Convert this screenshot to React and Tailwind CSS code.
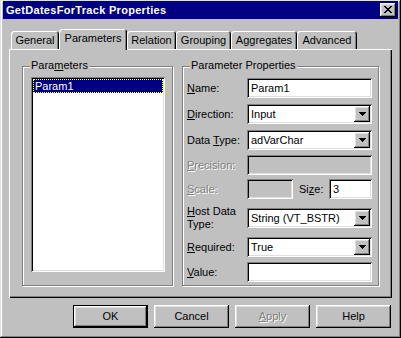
import React from "react";

const RAISED =
  "shadow-[inset_-1px_-1px_#000,inset_1px_1px_#fff,inset_-2px_-2px_#808080,inset_2px_2px_#dfdfdf]";
const SUNKEN =
  "shadow-[inset_1px_1px_#808080,inset_-1px_-1px_#fff,inset_2px_2px_#000,inset_-2px_-2px_#dfdfdf]";
const DIS = "text-[#808080] [text-shadow:1px_1px_0_#fff]";

function U({ children }) {
  return <span className="underline underline-offset-[1px]">{children}</span>;
}

function Arrow() {
  return (
    <svg width="7" height="4" viewBox="0 0 7 4" shapeRendering="crispEdges">
      <rect x="0" y="0" width="7" height="1" fill="#000" />
      <rect x="1" y="1" width="5" height="1" fill="#000" />
      <rect x="2" y="2" width="3" height="1" fill="#000" />
      <rect x="3" y="3" width="1" height="1" fill="#000" />
    </svg>
  );
}

function CloseGlyph() {
  const px = [
    [0, 0], [1, 0], [6, 0], [7, 0],
    [1, 1], [2, 1], [5, 1], [6, 1],
    [2, 2], [3, 2], [4, 2], [5, 2],
    [3, 3], [4, 3],
    [2, 4], [3, 4], [4, 4], [5, 4],
    [1, 5], [2, 5], [5, 5], [6, 5],
    [0, 6], [1, 6], [6, 6], [7, 6],
  ];
  return (
    <svg width="8" height="7" viewBox="0 0 8 7" shapeRendering="crispEdges">
      {px.map(([x, y], i) => (
        <rect key={i} x={x} y={y} width="1" height="1" fill="#000" />
      ))}
    </svg>
  );
}

function TextBox({ value, w = "w-[125px]", disabled }) {
  return (
    <div
      className={`${w} h-[20px] ${SUNKEN} ${
        disabled ? "bg-[#c0c0c0]" : "bg-white"
      } flex items-center pl-[4px] text-black`}
    >
      {value}
    </div>
  );
}

function Select({ value }) {
  return (
    <div
      className={`w-[125px] h-[20px] ${SUNKEN} bg-white flex items-center p-[2px]`}
    >
      <div className="flex-1 pl-[2px] text-black">{value}</div>
      <div
        className={`w-[16px] h-[16px] bg-[#c0c0c0] ${RAISED} flex items-center justify-center`}
      >
        <Arrow />
      </div>
    </div>
  );
}

function Tab({ label, selected, w }) {
  if (selected) {
    return (
      <div
        className={`${w} h-[21px] mb-[-1px] relative z-10 bg-[#c0c0c0] rounded-t-[3px] shadow-[inset_1px_1px_#fff,inset_-1px_0_#000,inset_-2px_0_#808080] flex justify-center pt-[3px]`}
      >
        {label}
      </div>
    );
  }
  return (
    <div
      className={`${w} h-[18px] bg-[#c0c0c0] rounded-t-[3px] shadow-[inset_1px_1px_#fff,inset_-1px_0_#000,inset_-2px_0_#808080] flex justify-center pt-[3px]`}
    >
      {label}
    </div>
  );
}

function Button({ children, def, disabled }) {
  return (
    <div
      className={`w-[75px] h-[23px] ${
        def ? "border border-black" : ""
      } bg-[#c0c0c0]`}
    >
      <div
        className={`w-full h-full ${RAISED} flex items-center justify-center ${
          disabled ? DIS : "text-black"
        }`}
      >
        {children}
      </div>
    </div>
  );
}

function Group({ legend, w, children, legendLeft = "left-[7px]" }) {
  return (
    <div
      className={`${w} h-[220px] relative border border-[#808080] shadow-[inset_1px_1px_#fff,1px_1px_#fff]`}
    >
      <div
        className={`absolute top-[-8px] ${legendLeft} bg-[#c0c0c0] px-[1px] leading-[13px]`}
      >
        {legend}
      </div>
      {children}
    </div>
  );
}

export default function App() {
  return (
    <div
      className={`w-[401px] h-[338px] bg-[#c0c0c0] text-[11px] leading-[13px] text-black font-['Liberation_Sans',Arial,sans-serif] shadow-[inset_-1px_-1px_#000,inset_1px_1px_#dfdfdf,inset_-2px_-2px_#808080,inset_2px_2px_#fff] pt-[1px] px-[3px] overflow-hidden`}
    >
      {/* Title bar */}
      <div className="h-[18px] bg-[#000080] flex items-center justify-between pl-[3px] pr-[2px]">
        <div className="text-white font-bold tracking-[0.3px]">
          GetDatesForTrack Properties
        </div>
        <div
          className={`w-[16px] h-[14px] bg-[#c0c0c0] ${RAISED} flex items-center justify-center pb-[1px]`}
        >
          <CloseGlyph />
        </div>
      </div>

      <div className="ml-[6px] w-[383px]">
        {/* Tabs */}
        <div className="mt-[10px] h-[20px] flex items-end pl-[2px]">
          <Tab label="General" w="w-[48px]" />
          <Tab label="Parameters" w="w-[68px]" selected />
          <Tab label="Relation" w="w-[49px]" />
          <Tab label="Grouping" w="w-[55px]" />
          <Tab label="Aggregates" w="w-[66px]" />
          <Tab label="Advanced" w="w-[60px]" />
        </div>

        {/* Panel */}
        <div
          className={`h-[249px] shadow-[inset_1px_1px_#fff,inset_-1px_-1px_#000,inset_-2px_-2px_#808080] flex items-start pl-[13px] pt-[17px]`}
        >
          <Group
            w="w-[151px]"
            legend={
              <span>
                Para<U>m</U>eters
              </span>
            }
          >
            <div
              className={`ml-[8px] mt-[10px] w-[134px] h-[195px] bg-white ${SUNKEN} p-[2px]`}
            >
              <div className="h-[14px] bg-[#000080] text-white border border-dotted border-[#ffff80] pl-[1px] leading-[12px]">
                Param1
              </div>
            </div>
          </Group>

          <div className="ml-[9px]">
            <Group w="w-[197px]" legend="Parameter Properties">
              <div className="pl-[4px] pt-[11px] flex flex-col">
                <div className="flex items-center">
                  <div className="w-[60px]">
                    <U>N</U>ame:
                  </div>
                  <TextBox value="Param1" />
                </div>
                <div className="flex items-center mt-[6px]">
                  <div className="w-[60px]">
                    <U>D</U>irection:
                  </div>
                  <Select value="Input" />
                </div>
                <div className="flex items-center mt-[6px]">
                  <div className="w-[60px]">
                    Data <U>T</U>ype:
                  </div>
                  <Select value="adVarChar" />
                </div>
                <div className="flex items-center mt-[5px]">
                  <div className={`w-[60px] ${DIS}`}>
                    <U>P</U>recision:
                  </div>
                  <TextBox value="" disabled />
                </div>
                <div className="flex items-center mt-[4px]">
                  <div className={`w-[60px] ${DIS}`}>
                    <U>S</U>cale:
                  </div>
                  <TextBox value="" w="w-[46px]" disabled />
                  <div className="ml-[6px] w-[30px]">
                    Si<U>z</U>e:
                  </div>
                  <TextBox value="3" w="w-[43px]" />
                </div>
                <div className="flex items-center mt-[6px]">
                  <div className="w-[60px]">
                    <U>H</U>ost Data
                    <br />
                    Type:
                  </div>
                  <Select value="String (VT_BSTR)" />
                </div>
                <div className="flex items-center mt-[6px]">
                  <div className="w-[60px]">
                    <U>R</U>equired:
                  </div>
                  <Select value="True" />
                </div>
                <div className="flex items-center mt-[5px]">
                  <div className="w-[60px]">
                    <U>V</U>alue:
                  </div>
                  <TextBox value="" />
                </div>
              </div>
            </Group>
          </div>
        </div>

        {/* Buttons */}
        <div className="mt-[7px] flex justify-end gap-[6px] pr-[1px]">
          <Button def>OK</Button>
          <Button>Cancel</Button>
          <Button disabled>
            <span>
              <U>A</U>pply
            </span>
          </Button>
          <Button>Help</Button>
        </div>
      </div>
    </div>
  );
}
